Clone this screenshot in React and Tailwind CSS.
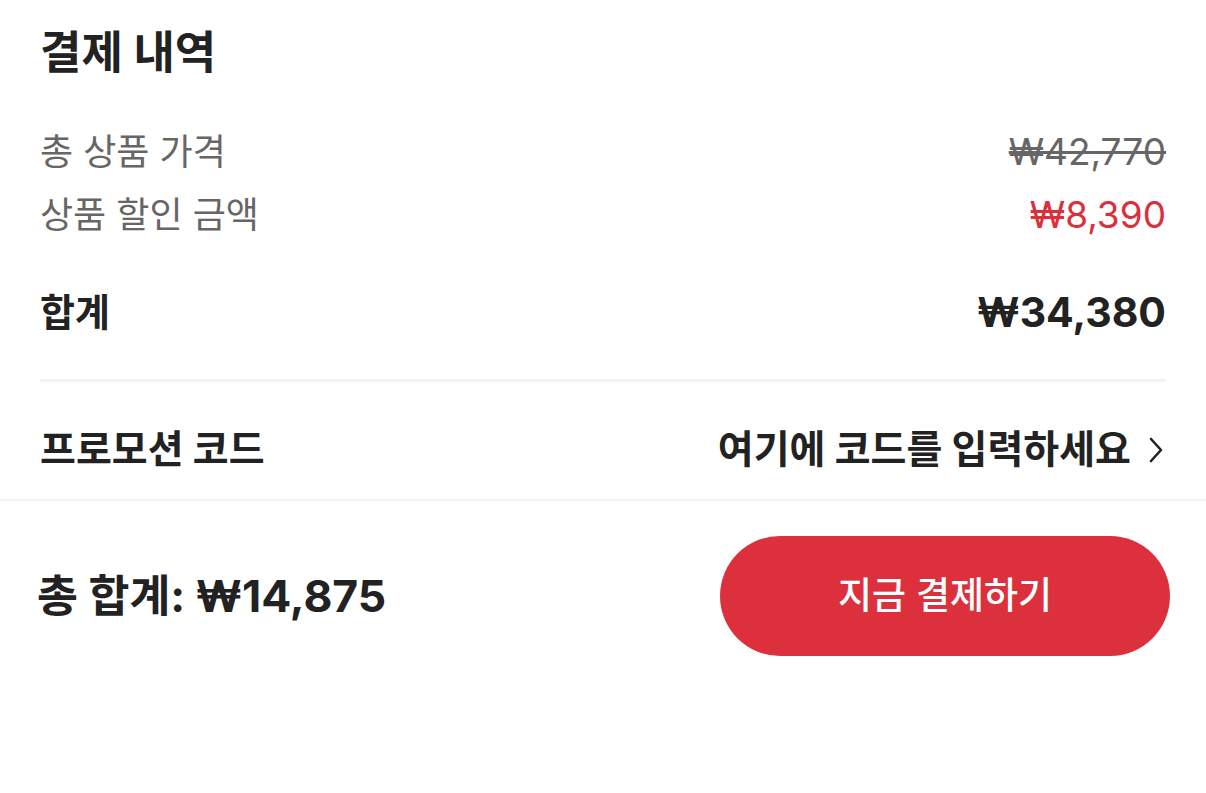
import React from 'react';

const font = { fontFamily: '"Inter", "Noto Sans CJK KR", sans-serif' };

const Row = ({ label, value, className = '', labelClass = '', valueClass = '' }) => (
  <div className={`flex items-center justify-between h-[63px] ${className}`}>
    <span className={labelClass}>{label}</span>
    <span className={valueClass}>{value}</span>
  </div>
);

export default function App() {
  return (
    <div className="w-[1206px] h-[793px] bg-white text-[#222]" style={font}>
      <section className="px-[40px] pt-[28px]">
        <h2 className="text-[45px] leading-[50px] font-bold">결제 내역</h2>

        <div className="mt-[42px] text-[36px] text-[#666]">
          <Row label="총 상품 가격" value="₩42,770" valueClass="line-through text-[37px]" />
          <Row label="상품 할인 금액" value="₩8,390" valueClass="text-[#dc2f3c] text-[37px]" />
        </div>

        <Row
          className="mt-[35px] text-[38px] font-bold"
          label="합계"
          value="₩34,380"
          valueClass="text-[41px]"
        />

        <div className="mt-[35px] h-[3px] bg-[#f2f2f2]" />

        <div className="mt-[36px] flex items-center justify-between h-[63px] text-[39px] font-bold">
          <span>프로모션 코드</span>
          <button className="flex items-center gap-[18px] pr-[3px]">
            <span>여기에 코드를 입력하세요</span>
            <svg width="14" height="26" viewBox="0 0 14 26" fill="none" stroke="#222" strokeWidth="2.6" strokeLinecap="round" strokeLinejoin="round">
              <polyline points="2,2 12,13 2,24" />
            </svg>
          </button>
        </div>
      </section>

      <div className="mt-[18px] h-[2px] bg-[#f2f2f2]" />

      <div className="flex items-center justify-between pl-[37px] pr-[36px] pt-[35px]">
        <span className="text-[44.5px] font-bold">총 합계: ₩14,875</span>
        <button className="w-[450px] h-[120px] rounded-full bg-[#dd303d] text-white text-[37px] font-medium">
          지금 결제하기
        </button>
      </div>
    </div>
  );
}
